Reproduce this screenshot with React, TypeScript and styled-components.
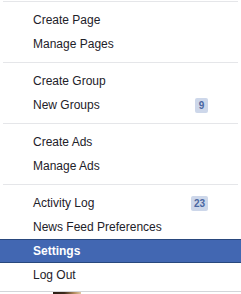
import styled, { createGlobalStyle } from "styled-components";

const GlobalStyle = createGlobalStyle`
  html, body {
    margin: 0;
    padding: 0;
    background: #ffffff;
  }
  body {
    font-family: "Liberation Sans", Arial, Helvetica, sans-serif;
    overflow: hidden;
  }
`;

const Menu = styled.ul`
  list-style: none;
  margin: 0;
  padding: 0 0 4px;
  width: 241px;
  background: #ffffff;
  border-bottom: 1px solid #d3d5d9;
`;

const Separator = styled.li`
  height: 1px;
  margin: 6px 3px;
  background: #e5e6e9;
`;

const TopSeparator = styled(Separator)`
  margin-top: 1px;
`;

const Item = styled.li<{ $active?: boolean }>`
  display: flex;
  align-items: center;
  justify-content: space-between;
  box-sizing: border-box;
  height: 24px;
  padding: 0 33px;
  font-size: 12px;
  color: ${(p) => (p.$active ? "#ffffff" : "#1d2129")};
  font-weight: ${(p) => (p.$active ? "bold" : "normal")};
  background: ${(p) => (p.$active ? "#4267b2" : "transparent")};
  border-top: 1px solid ${(p) => (p.$active ? "#29487d" : "transparent")};
  border-bottom: 1px solid ${(p) => (p.$active ? "#29487d" : "transparent")};
  cursor: pointer;
`;

const Badge = styled.span`
  min-width: 13px;
  height: 15px;
  padding: 0 3px;
  box-sizing: border-box;
  border-radius: 2px;
  background: #cdd7ea;
  color: #4b67a1;
  font-size: 10px;
  font-weight: bold;
  line-height: 15px;
  text-align: center;
`;

const Behind = styled.div`
  position: relative;
  height: 3px;
  background: #ffffff;
`;

const Photo = styled.div`
  position: absolute;
  left: 53px;
  top: 0;
  width: 28px;
  height: 3px;
  background: linear-gradient(90deg, #2a1e14 0%, #3b2a1c 40%, #b08a5c 75%, #e2c9a4 100%);
`;

type Entry = { label: string; badge?: string; active?: boolean } | "sep";

const entries: Entry[] = [
  { label: "Create Page" },
  { label: "Manage Pages" },
  "sep",
  { label: "Create Group" },
  { label: "New Groups", badge: "9" },
  "sep",
  { label: "Create Ads" },
  { label: "Manage Ads" },
  "sep",
  { label: "Activity Log", badge: "23" },
  { label: "News Feed Preferences" },
  { label: "Settings", active: true },
  { label: "Log Out" },
];

const App = () => {
  return (
    <>
      <GlobalStyle />
      <Menu>
        <TopSeparator />
        {entries.map((e, i) =>
          e === "sep" ? (
            <Separator key={i} />
          ) : (
            <Item key={i} $active={e.active}>
              <span>{e.label}</span>
              {e.badge && <Badge>{e.badge}</Badge>}
            </Item>
          )
        )}
      </Menu>
      <Behind>
        <Photo />
      </Behind>
    </>
  );
};

export default App;
